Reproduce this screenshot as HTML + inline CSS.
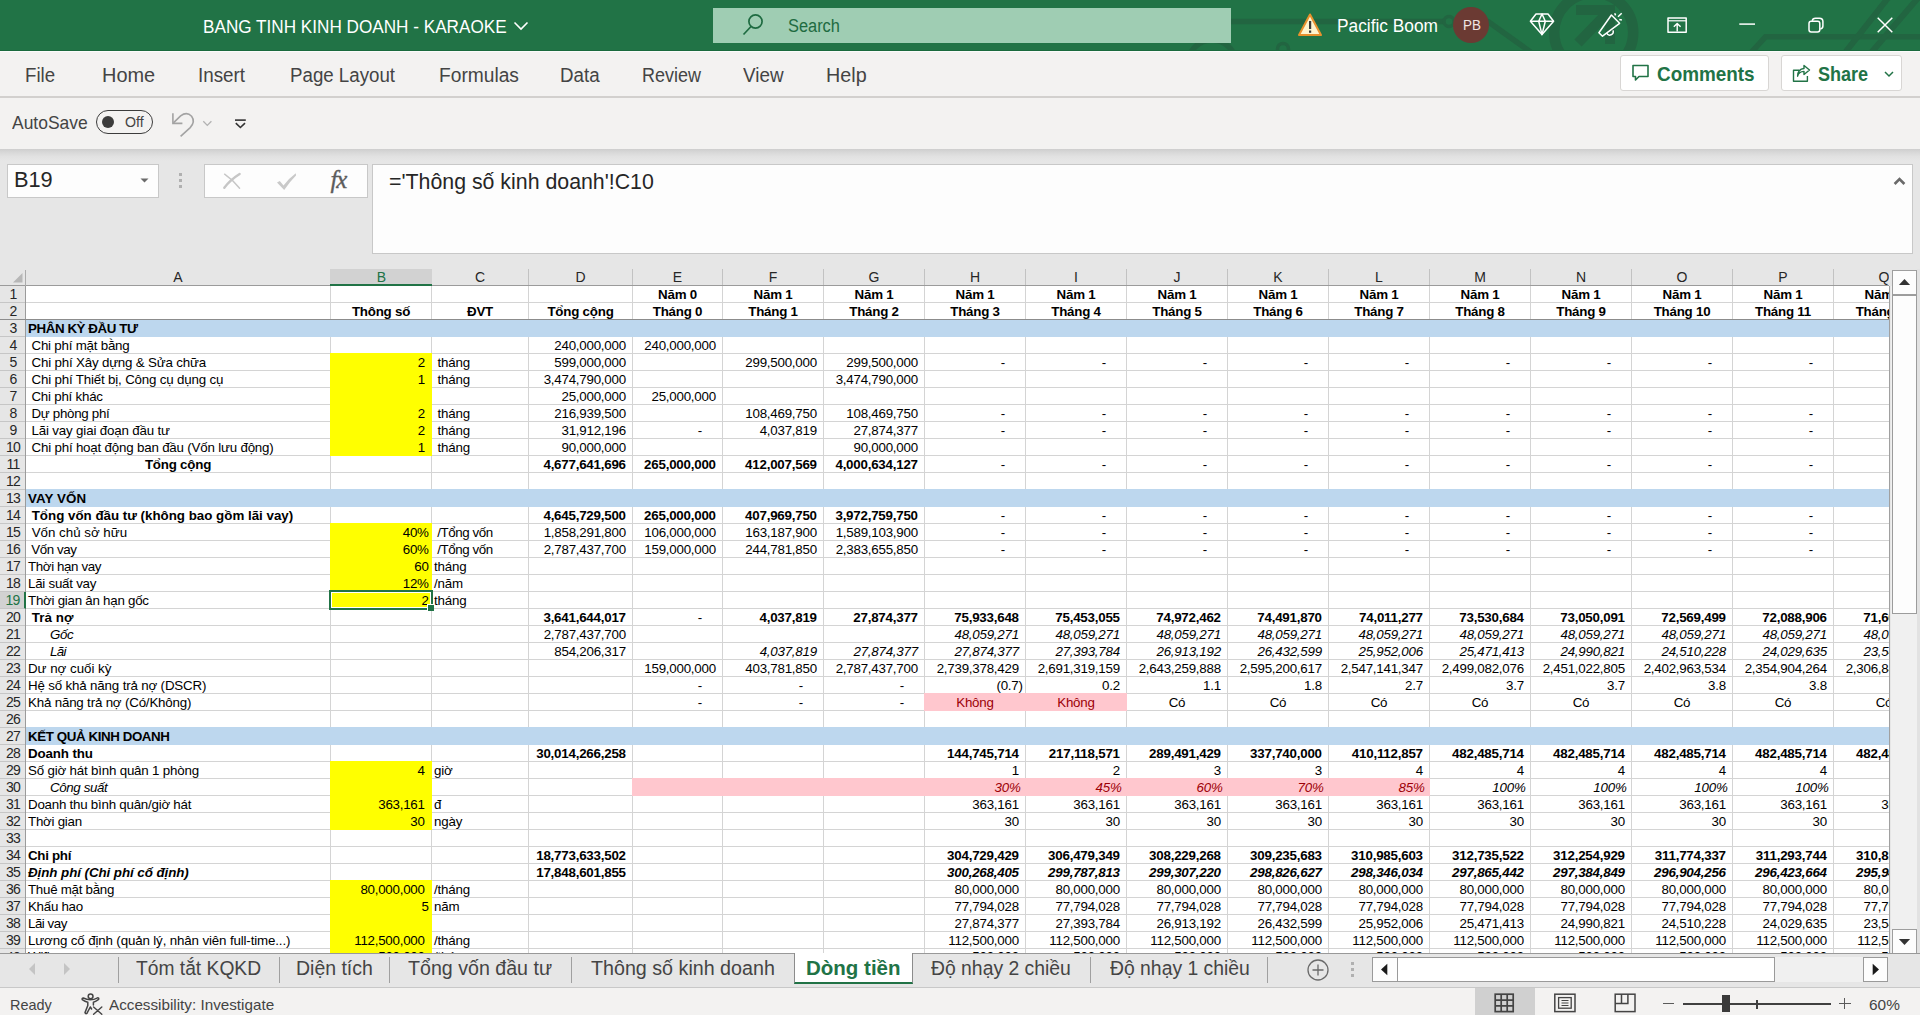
<!DOCTYPE html>
<html><head><meta charset="utf-8"><title>Excel</title>
<style>
*{box-sizing:border-box;margin:0;padding:0}
html,body{width:1920px;height:1015px;overflow:hidden;background:#e6e6e6;font-family:"Liberation Sans",sans-serif;}
.abs{position:absolute}
.t{position:absolute;white-space:pre;transform-origin:0 50%;}
/* title bar */
#title{position:absolute;left:0;top:0;width:1920px;height:51px;background:#217346;overflow:hidden;border-bottom:1px solid #1a6a3e}
#search{position:absolute;left:713px;top:8px;width:518px;height:35px;background:#9fcdb3}
/* ribbon */
#tabs{position:absolute;left:0;top:51px;width:1920px;height:45px;background:#f3f2f1;border-top:1px solid #fbfbfb}
#tabline{position:absolute;left:0;top:96px;width:1920px;height:2px;background:#d2d0ce}
#qat{position:absolute;left:0;top:98px;width:1920px;height:51px;background:#f3f2f1}
#shadow{position:absolute;left:0;top:149px;width:1920px;height:12px;background:linear-gradient(#cecece,#d7d7d7 25%,#e1e1e1 60%,#e6e6e6)}
.tab{position:absolute;top:63px;font-size:20px;line-height:24px;color:#444;white-space:pre;transform-origin:0 50%}
.btn{position:absolute;top:55px;height:36px;background:#fff;border:1px solid #d8d6d4;border-radius:3px}
/* formula bar */
#namebox{position:absolute;left:7px;top:164px;width:152px;height:34px;background:#fdfdfd;border:1px solid #c8c8c8}
#fxbox{position:absolute;left:204px;top:164px;width:164px;height:34px;background:#fdfdfd;border:1px solid #c8c8c8}
#formula{position:absolute;left:372px;top:164px;width:1541px;height:90px;background:#fdfdfd;border:1px solid #c8c8c8}
/* grid */
#grid{position:absolute;left:0;top:269px;width:1889px;height:684px;overflow:hidden;background:#fff}
#cells{position:absolute;left:0;top:0;width:1890px;height:700px;
 background:linear-gradient(#d4d4d4,#d4d4d4) 330px 0/1px 100% no-repeat,linear-gradient(#d4d4d4,#d4d4d4) 431px 0/1px 100% no-repeat,linear-gradient(#d4d4d4,#d4d4d4) 528px 0/1px 100% no-repeat,linear-gradient(#d4d4d4,#d4d4d4) 632px 0/1px 100% no-repeat,linear-gradient(#d4d4d4,#d4d4d4) 722px 0/1px 100% no-repeat,linear-gradient(#d4d4d4,#d4d4d4) 823px 0/1px 100% no-repeat,linear-gradient(#d4d4d4,#d4d4d4) 924px 0/1px 100% no-repeat,linear-gradient(#d4d4d4,#d4d4d4) 1025px 0/1px 100% no-repeat,linear-gradient(#d4d4d4,#d4d4d4) 1126px 0/1px 100% no-repeat,linear-gradient(#d4d4d4,#d4d4d4) 1227px 0/1px 100% no-repeat,linear-gradient(#d4d4d4,#d4d4d4) 1328px 0/1px 100% no-repeat,linear-gradient(#d4d4d4,#d4d4d4) 1429px 0/1px 100% no-repeat,linear-gradient(#d4d4d4,#d4d4d4) 1530px 0/1px 100% no-repeat,linear-gradient(#d4d4d4,#d4d4d4) 1631px 0/1px 100% no-repeat,linear-gradient(#d4d4d4,#d4d4d4) 1732px 0/1px 100% no-repeat,linear-gradient(#d4d4d4,#d4d4d4) 1833px 0/1px 100% no-repeat, repeating-linear-gradient(transparent 0,transparent 16px,#d4d4d4 16px,#d4d4d4 17px) 0 17px/100% 17px;}
.c{position:absolute;height:17px;line-height:17px;font-size:13.33px;letter-spacing:-0.2px;color:#000;white-space:pre;padding:0 2px;overflow:visible}
.f{position:absolute}
.b{font-weight:bold;letter-spacing:-0.22px !important}
.i{font-style:italic}
.ctr{text-align:center}
.r{text-align:right;padding-right:2.3px;letter-spacing:-0.24px}
.acc{text-align:right;padding-right:6.2px;letter-spacing:-0.24px}
.acc2{text-align:right;padding-right:6.3px;letter-spacing:-0.24px}
.dash{text-align:right;padding-right:20px}
.pct{text-align:right;padding-right:4.5px;letter-spacing:-0.24px}
.red{color:#9c0006}
.tv{letter-spacing:-0.42px}
.ind{padding-left:24px}
.ch{position:absolute;top:0;height:16px;line-height:17px;font-size:14px;text-align:center;color:#262626;background:#e6e6e6}
.ch.sel{background:#d2d2d2;color:#217346;border-bottom:2px solid #217346;margin-left:-1px;padding-left:1px;box-sizing:content-box;height:15px;width:101px !important;border-left:0;z-index:3}
.chs{position:absolute;top:0px;width:1px;height:16px;background:#c2c2c2}
.rh{position:absolute;left:0;width:25px;height:17px;line-height:17px;font-size:14px;text-align:center;color:#262626;background:#e6e6e6;letter-spacing:-0.7px;padding-left:1px;border-bottom:1px solid #c6c6c6}
.rh.sel{background:#d2d2d2;color:#217346;border-right:2px solid #217346;width:26px;z-index:3}
#hdrtop{position:absolute;left:0;top:0;width:1890px;height:17px;background:#e6e6e6;border-bottom:1px solid #9b9b9b}
#hdrleft{position:absolute;left:0;top:17px;width:26px;height:684px;background:#e6e6e6;border-right:1px solid #9b9b9b}
/* bottom */
#sheetbar{position:absolute;left:0;top:953px;width:1920px;height:34px;background:#e6e6e6;border-top:1px solid #999}
#status{position:absolute;left:0;top:987px;width:1920px;height:28px;background:#f3f2f1;border-top:1px solid #c8c8c8}
.st{position:absolute;top:956.3px;font-size:19.5px;line-height:24px;color:#444;white-space:pre;transform-origin:0 50%}
.sep{position:absolute;top:957px;width:1px;height:26px;background:#a0a0a0}
</style></head>
<body>
<!-- TITLE BAR -->
<div id="title">
  <svg class="abs" style="left:0;top:0" width="1920" height="51" viewBox="0 0 1920 51" fill="none" stroke="#226541" stroke-width="5.5">
    <path d="M1231 21.5 H1443 M1455 21.5 H1488 L1532 53"/>
    <circle cx="1449" cy="21.5" r="5" stroke-width="3.5"/>
    <circle cx="1283" cy="49" r="5.5" stroke-width="3.5"/>
    <circle cx="1212" cy="64" r="24"/>
    <circle cx="1593.7" cy="32.5" r="39.5" stroke-width="10.5"/>
    <path d="M1576 10 H1610 V44 M1609 11 L1578 43" stroke-width="10"/>
    <path d="M1748 56 L1765.5 36.8 H1920"/>
    <path d="M1888 -2 L1844 54 M1918 -2 L1870 54" stroke-width="6"/>
  </svg>
  <div class="t" id="tt" style="left:203.05px;transform:scaleX(0.9527);top:14px;font-size:18px;line-height:26px;color:#fff">BANG TINH KINH DOANH - KARAOKE</div>
  <svg class="abs" style="left:513px;top:20px" width="16" height="12" viewBox="0 0 16 12" fill="none" stroke="#fff" stroke-width="1.6"><path d="M1.5 2.5 L8 9 L14.5 2.5"/></svg>
  <div id="search"></div>
  <svg class="abs" style="left:740px;top:10px" width="30" height="30" viewBox="0 0 30 30" fill="none" stroke="#1e6b41" stroke-width="1.7"><circle cx="15.5" cy="11.5" r="6.6"/><path d="M11 16.5 L3.5 24.5"/></svg>
  <div class="t" id="ts" style="left:787.50px;transform:scaleX(0.9104);top:13px;font-size:18px;line-height:26px;color:#1e6b41">Search</div>
  <!-- warning -->
  <svg class="abs" style="left:1297px;top:12px" width="26" height="26" viewBox="0 0 26 26"><path d="M13 2.5 L24 23 H2 Z" fill="#fff4ce" stroke="#e8912d" stroke-width="2" stroke-linejoin="round"/><rect x="12" y="9" width="2.2" height="8" fill="#3b3a39"/><rect x="12" y="18.5" width="2.2" height="2.3" fill="#3b3a39"/></svg>
  <div class="t" id="tp" style="left:1336.54px;transform:scaleX(0.9608);top:13px;font-size:18px;line-height:26px;color:#fff">Pacific Boom</div>
  <div class="abs" style="left:1453px;top:7px;width:36px;height:36px;border-radius:18px;background:#6b3a33"></div>
  <div class="t" id="tpb" style="left:1462.61px;transform:scaleX(0.8945);top:14px;font-size:15px;line-height:22px;color:#f0e6e4">PB</div>
  <!-- diamond -->
  <svg class="abs" style="left:1520px;top:5px" width="180" height="40" viewBox="1520 5 180 40" fill="none" stroke="#fff" stroke-width="1.5" stroke-linejoin="round" stroke-linecap="butt">
    <path d="M1536 14 H1548 L1553.6 21.2 L1542 34.6 L1530.4 21.2 Z"/>
    <path d="M1530.4 21.2 H1553.6 M1538.7 21.2 L1542 14 L1545.3 21.2 M1538.7 21.2 L1542 34.6 L1545.3 21.2"/>
    <!-- megaphone -->
    <path d="M1611.4 15 L1619.6 23.3 L1602.5 36.2 L1598.9 32.7 Z"/>
    <path d="M1606.7 33 A3.3 3.3 0 0 0 1612.9 30.4"/>
    <path d="M1614.7 13.2 L1615.6 15.4 M1618 16.7 L1621.7 13.3 M1619.3 19.6 L1621.9 20"/>
    <!-- ribbon display -->
    <rect x="1668" y="18" width="18.2" height="14.2"/>
    <path d="M1668 20.8 H1686" stroke-width="1.2"/>
    <path d="M1677.2 31.5 V23.6 M1673.8 26.8 L1677.2 23.4 L1680.6 26.8" stroke-width="1.4"/>
  </svg>
  <!-- min / restore / close -->
  <svg class="abs" style="left:1720px;top:5px" width="200" height="40" viewBox="1720 5 200 40" fill="none" stroke="#fff" stroke-width="1.5">
    <path d="M1739.3 24.1 H1755"/>
    <rect x="1809" y="21.2" width="10.8" height="10.8" rx="2.2"/>
    <path d="M1812.3 20.8 Q1812.6 18.2 1815.5 18.2 H1819.5 Q1822.9 18.2 1822.9 21.6 V26 Q1822.9 28.6 1820.3 28.9"/>
    <path d="M1877.7 17.7 L1892.3 32.3 M1892.3 17.7 L1877.7 32.3"/>
  </svg>
</div>
<!-- RIBBON TABS -->
<div id="tabs"></div>
<div id="tabline"></div>
<div id="qat"></div>
<div id="shadow"></div>
<div class="tab" id="tab0" style="left:25.07px;transform:scaleX(0.9324);">File</div>
<div class="tab" id="tab1" style="left:102.00px;transform:scaleX(0.9957);">Home</div>
<div class="tab" id="tab2" style="left:198.06px;transform:scaleX(0.9401);">Insert</div>
<div class="tab" id="tab3" style="left:290.06px;transform:scaleX(0.9351);">Page Layout</div>
<div class="tab" id="tab4" style="left:439.04px;transform:scaleX(0.9593);">Formulas</div>
<div class="tab" id="tab5" style="left:560.06px;transform:scaleX(0.9377);">Data</div>
<div class="tab" id="tab6" style="left:641.60px;transform:scaleX(0.8982);">Review</div>
<div class="tab" id="tab7" style="left:743.00px;transform:scaleX(0.9416);">View</div>
<div class="tab" id="tab8" style="left:826.01px;transform:scaleX(0.9873);">Help</div>
<div class="btn" style="left:1620px;width:149px"></div>
<div class="btn" style="left:1781px;width:121px"></div>
<svg class="abs" style="left:1631px;top:63px" width="20" height="20" viewBox="0 0 20 20" fill="none" stroke="#217346" stroke-width="1.6" stroke-linejoin="round"><path d="M2 2.5 H17 V13.5 H8 L4.5 17 V13.5 H2 Z"/></svg>
<div class="t" id="tcm" style="left:1657.00px;transform:scaleX(0.8995);top:61px;font-size:21px;line-height:26px;color:#217346;font-weight:bold">Comments</div>
<svg class="abs" style="left:1790px;top:62px" width="24" height="22" viewBox="1790 62 24 22" fill="none" stroke="#217346" stroke-width="1.4" stroke-linejoin="round"><path d="M1799 70.2 H1793.5 V81.2 H1807.4 V76"/><path d="M1797.6 76.2 Q1798.6 71.6 1804 71.4 V74.5 L1809.5 70 L1804 65.5 V68.5 Q1797.9 68.9 1797.6 76.2 Z"/></svg>
<div class="t" id="tsh" style="left:1818.00px;transform:scaleX(0.8581);top:61px;font-size:21px;line-height:26px;color:#217346;font-weight:bold">Share</div>
<svg class="abs" style="left:1883px;top:69px" width="12" height="10" viewBox="0 0 12 10" fill="none" stroke="#217346" stroke-width="1.5"><path d="M2 3 L6 7 L10 3"/></svg>
<!-- QAT -->
<div class="t" id="tas" style="left:11.50px;transform:scaleX(0.9445);top:110px;font-size:18.5px;line-height:26px;color:#444">AutoSave</div>
<div class="abs" style="left:96px;top:110px;width:57px;height:24px;border:1.4px solid #3c3c3c;border-radius:12px"></div>
<div class="abs" style="left:102px;top:116px;width:12px;height:12px;border-radius:6px;background:#3c3c3c"></div>
<div class="t" id="toff" style="left:125.00px;transform:scaleX(1.0121);top:112px;font-size:14px;line-height:20px;color:#444">Off</div>
<svg class="abs" style="left:168px;top:108px" width="32" height="32" viewBox="168 108 32 32" fill="none" stroke="#a3a3a3" stroke-width="1.6"><path d="M172.9 113.2 V123.4 H182.4"/><path d="M173.4 122.9 L180.6 115.9 Q186.8 111.3 191.6 116.2 Q195.6 121.6 190.2 127.6 L180.6 136.4"/></svg>
<svg class="abs" style="left:201px;top:118px" width="14" height="10" viewBox="201 118 14 10" fill="none" stroke="#b2b2b2" stroke-width="1.3"><path d="M203.3 121.3 L207.3 125.4 L211.4 121.3"/></svg>
<svg class="abs" style="left:232px;top:116px" width="17" height="15" viewBox="232 116 17 15" fill="none" stroke="#333" stroke-width="1.6"><path d="M235 120.1 H245.8"/><path d="M235.8 123.2 L240.4 127.5 L245 123.2"/></svg>
<!-- FORMULA BAR -->
<div id="namebox"></div>
<div class="t" id="tnb" style="left:14.01px;transform:scaleX(0.9892);top:167px;font-size:22px;line-height:26px;color:#262626">B19</div>
<svg class="abs" style="left:140px;top:178px" width="9" height="5" viewBox="0 0 9 5"><path d="M0.5 0.5 H8.5 L4.5 4.5 Z" fill="#6a6a6a"/></svg>
<div class="abs" style="left:179px;top:173px;width:3px;height:3px;background:#b0b0b0"></div>
<div class="abs" style="left:179px;top:179px;width:3px;height:3px;background:#b0b0b0"></div>
<div class="abs" style="left:179px;top:185px;width:3px;height:3px;background:#b0b0b0"></div>
<div id="fxbox"></div>
<svg class="abs" style="left:220px;top:170px" width="24" height="22" viewBox="220 170 24 22" fill="none" stroke="#c6c6c6" stroke-linecap="round"><path d="M224.3 187.8 Q230 180 239.6 174" stroke-width="2.4"/><path d="M224.6 174.2 Q233 180 239.6 188.2" stroke-width="1.4"/></svg>
<svg class="abs" style="left:274px;top:170px" width="26" height="22" viewBox="274 170 26 22"><path d="M277 182.5 L279.8 181 L283.5 185.5 Q288.5 178.5 295.8 173.2 L296 175.5 Q289.5 182 284.2 190 Z" fill="#c9c9c9"/></svg>
<div class="t" style="left:330.5px;top:165.5px;font-family:'Liberation Serif',serif;font-style:italic;font-size:25px;line-height:28px;color:#5c5c5c;letter-spacing:-1.2px;-webkit-text-stroke:0.35px #5c5c5c">fx</div>
<div id="formula"></div>
<div class="t" id="tfm" style="left:388.50px;transform:scaleX(1.0014);top:169px;font-size:21.3px;line-height:26px;color:#262626">='Thông số kinh doanh'!C10</div>
<svg class="abs" style="left:1892px;top:175px" width="15" height="12" viewBox="1892 175 15 12" fill="none" stroke="#6a6a6a" stroke-width="2.6"><path d="M1894.6 184 L1899.5 179 L1904.4 184"/></svg>
<!-- GRID -->
<div id="grid">
  <div id="cells">
<div class="f" style="left:26px;top:50px;width:1909px;height:18px;background:#bdd7ee"></div>
<div class="f" style="left:26px;top:220px;width:1909px;height:18px;background:#bdd7ee"></div>
<div class="f" style="left:26px;top:458px;width:1909px;height:18px;background:#bdd7ee"></div>
<div class="f" style="left:330px;top:84px;width:102px;height:103px;background:#ffff00"></div>
<div class="f" style="left:330px;top:254px;width:102px;height:86px;background:#ffff00"></div>
<div class="f" style="left:330px;top:492px;width:102px;height:69px;background:#ffff00"></div>
<div class="f" style="left:330px;top:611px;width:102px;height:86px;background:#ffff00"></div>
<div class="f" style="left:924px;top:424px;width:203px;height:18px;background:#ffc7ce"></div>
<div class="f" style="left:632px;top:509px;width:798px;height:18px;background:#ffc7ce"></div>
<div class="c b ctr" style="left:633px;top:17px;width:89px">Năm 0</div>
<div class="c b ctr" style="left:723px;top:17px;width:100px">Năm 1</div>
<div class="c b ctr" style="left:824px;top:17px;width:100px">Năm 1</div>
<div class="c b ctr" style="left:925px;top:17px;width:100px">Năm 1</div>
<div class="c b ctr" style="left:1026px;top:17px;width:100px">Năm 1</div>
<div class="c b ctr" style="left:1127px;top:17px;width:100px">Năm 1</div>
<div class="c b ctr" style="left:1228px;top:17px;width:100px">Năm 1</div>
<div class="c b ctr" style="left:1329px;top:17px;width:100px">Năm 1</div>
<div class="c b ctr" style="left:1430px;top:17px;width:100px">Năm 1</div>
<div class="c b ctr" style="left:1531px;top:17px;width:100px">Năm 1</div>
<div class="c b ctr" style="left:1632px;top:17px;width:100px">Năm 1</div>
<div class="c b ctr" style="left:1733px;top:17px;width:100px">Năm 1</div>
<div class="c b ctr" style="left:1834px;top:17px;width:100px">Năm 1</div>
<div class="c b ctr" style="left:331px;top:34px;width:100px">Thông số</div>
<div class="c b ctr" style="left:432px;top:34px;width:96px">ĐVT</div>
<div class="c b ctr" style="left:529px;top:34px;width:103px">Tổng cộng</div>
<div class="c b ctr" style="left:633px;top:34px;width:89px">Tháng 0</div>
<div class="c b ctr" style="left:723px;top:34px;width:100px">Tháng 1</div>
<div class="c b ctr" style="left:824px;top:34px;width:100px">Tháng 2</div>
<div class="c b ctr" style="left:925px;top:34px;width:100px">Tháng 3</div>
<div class="c b ctr" style="left:1026px;top:34px;width:100px">Tháng 4</div>
<div class="c b ctr" style="left:1127px;top:34px;width:100px">Tháng 5</div>
<div class="c b ctr" style="left:1228px;top:34px;width:100px">Tháng 6</div>
<div class="c b ctr" style="left:1329px;top:34px;width:100px">Tháng 7</div>
<div class="c b ctr" style="left:1430px;top:34px;width:100px">Tháng 8</div>
<div class="c b ctr" style="left:1531px;top:34px;width:100px">Tháng 9</div>
<div class="c b ctr" style="left:1632px;top:34px;width:100px">Tháng 10</div>
<div class="c b ctr" style="left:1733px;top:34px;width:100px">Tháng 11</div>
<div class="c b ctr" style="left:1834px;top:34px;width:100px">Tháng 12</div>
<div id="a3" class="c b" style="letter-spacing:-0.416px !important;left:26px;top:51px;width:304px">PHÂN KỲ ĐẦU TƯ</div>
<div id="a4" class="c " style="letter-spacing:-0.218px !important;left:26px;top:68px;width:304px"> Chi phí mặt bằng</div>
<div class="c acc " style="left:529px;top:68px;width:103px">240,000,000</div>
<div class="c acc " style="left:633px;top:68px;width:89px">240,000,000</div>
<div id="a5" class="c " style="letter-spacing:-0.185px !important;left:26px;top:85px;width:304px"> Chi phí Xây dựng &amp; Sửa chữa</div>
<div class="c acc" style="left:331px;top:85px;width:100px">2</div>
<div class="c " style="left:432px;top:85px;width:96px"> tháng</div>
<div class="c acc " style="left:529px;top:85px;width:103px">599,000,000</div>
<div class="c acc " style="left:723px;top:85px;width:100px">299,500,000</div>
<div class="c acc " style="left:824px;top:85px;width:100px">299,500,000</div>
<div class="c dash" style="left:925px;top:85px;width:100px">-</div>
<div class="c dash" style="left:1026px;top:85px;width:100px">-</div>
<div class="c dash" style="left:1127px;top:85px;width:100px">-</div>
<div class="c dash" style="left:1228px;top:85px;width:100px">-</div>
<div class="c dash" style="left:1329px;top:85px;width:100px">-</div>
<div class="c dash" style="left:1430px;top:85px;width:100px">-</div>
<div class="c dash" style="left:1531px;top:85px;width:100px">-</div>
<div class="c dash" style="left:1632px;top:85px;width:100px">-</div>
<div class="c dash" style="left:1733px;top:85px;width:100px">-</div>
<div id="a6" class="c " style="letter-spacing:-0.176px !important;left:26px;top:102px;width:304px"> Chi phí Thiết bị, Công cụ dụng cụ</div>
<div class="c acc" style="left:331px;top:102px;width:100px">1</div>
<div class="c " style="left:432px;top:102px;width:96px"> tháng</div>
<div class="c acc " style="left:529px;top:102px;width:103px">3,474,790,000</div>
<div class="c acc " style="left:824px;top:102px;width:100px">3,474,790,000</div>
<div id="a7" class="c " style="letter-spacing:-0.235px !important;left:26px;top:119px;width:304px"> Chi phí khác</div>
<div class="c acc " style="left:529px;top:119px;width:103px">25,000,000</div>
<div class="c acc " style="left:633px;top:119px;width:89px">25,000,000</div>
<div id="a8" class="c " style="letter-spacing:-0.295px !important;left:26px;top:136px;width:304px"> Dự phòng phí</div>
<div class="c acc" style="left:331px;top:136px;width:100px">2</div>
<div class="c " style="left:432px;top:136px;width:96px"> tháng</div>
<div class="c acc " style="left:529px;top:136px;width:103px">216,939,500</div>
<div class="c acc " style="left:723px;top:136px;width:100px">108,469,750</div>
<div class="c acc " style="left:824px;top:136px;width:100px">108,469,750</div>
<div class="c dash" style="left:925px;top:136px;width:100px">-</div>
<div class="c dash" style="left:1026px;top:136px;width:100px">-</div>
<div class="c dash" style="left:1127px;top:136px;width:100px">-</div>
<div class="c dash" style="left:1228px;top:136px;width:100px">-</div>
<div class="c dash" style="left:1329px;top:136px;width:100px">-</div>
<div class="c dash" style="left:1430px;top:136px;width:100px">-</div>
<div class="c dash" style="left:1531px;top:136px;width:100px">-</div>
<div class="c dash" style="left:1632px;top:136px;width:100px">-</div>
<div class="c dash" style="left:1733px;top:136px;width:100px">-</div>
<div id="a9" class="c " style="letter-spacing:-0.170px !important;left:26px;top:153px;width:304px"> Lãi vay giai đoạn đầu tư</div>
<div class="c acc" style="left:331px;top:153px;width:100px">2</div>
<div class="c " style="left:432px;top:153px;width:96px"> tháng</div>
<div class="c acc " style="left:529px;top:153px;width:103px">31,912,196</div>
<div class="c dash" style="left:633px;top:153px;width:89px">-</div>
<div class="c acc " style="left:723px;top:153px;width:100px">4,037,819</div>
<div class="c acc " style="left:824px;top:153px;width:100px">27,874,377</div>
<div class="c dash" style="left:925px;top:153px;width:100px">-</div>
<div class="c dash" style="left:1026px;top:153px;width:100px">-</div>
<div class="c dash" style="left:1127px;top:153px;width:100px">-</div>
<div class="c dash" style="left:1228px;top:153px;width:100px">-</div>
<div class="c dash" style="left:1329px;top:153px;width:100px">-</div>
<div class="c dash" style="left:1430px;top:153px;width:100px">-</div>
<div class="c dash" style="left:1531px;top:153px;width:100px">-</div>
<div class="c dash" style="left:1632px;top:153px;width:100px">-</div>
<div class="c dash" style="left:1733px;top:153px;width:100px">-</div>
<div id="a10" class="c " style="letter-spacing:-0.193px !important;left:26px;top:170px;width:304px"> Chi phí hoạt động ban đầu (Vốn lưu động)</div>
<div class="c acc" style="left:331px;top:170px;width:100px">1</div>
<div class="c " style="left:432px;top:170px;width:96px"> tháng</div>
<div class="c acc " style="left:529px;top:170px;width:103px">90,000,000</div>
<div class="c acc " style="left:824px;top:170px;width:100px">90,000,000</div>
<div class="c b ctr" style="left:26px;top:187px;width:304px">Tổng cộng</div>
<div class="c acc b" style="left:529px;top:187px;width:103px">4,677,641,696</div>
<div class="c acc b" style="left:633px;top:187px;width:89px">265,000,000</div>
<div class="c acc b" style="left:723px;top:187px;width:100px">412,007,569</div>
<div class="c acc b" style="left:824px;top:187px;width:100px">4,000,634,127</div>
<div class="c dash" style="left:925px;top:187px;width:100px">-</div>
<div class="c dash" style="left:1026px;top:187px;width:100px">-</div>
<div class="c dash" style="left:1127px;top:187px;width:100px">-</div>
<div class="c dash" style="left:1228px;top:187px;width:100px">-</div>
<div class="c dash" style="left:1329px;top:187px;width:100px">-</div>
<div class="c dash" style="left:1430px;top:187px;width:100px">-</div>
<div class="c dash" style="left:1531px;top:187px;width:100px">-</div>
<div class="c dash" style="left:1632px;top:187px;width:100px">-</div>
<div class="c dash" style="left:1733px;top:187px;width:100px">-</div>
<div id="a13" class="c b" style="letter-spacing:0.091px !important;left:26px;top:221px;width:304px">VAY VỐN</div>
<div id="a14" class="c b" style="letter-spacing:0.001px !important;left:26px;top:238px;width:304px"> Tổng vốn đầu tư (không bao gồm lãi vay)</div>
<div class="c acc b" style="left:529px;top:238px;width:103px">4,645,729,500</div>
<div class="c acc b" style="left:633px;top:238px;width:89px">265,000,000</div>
<div class="c acc b" style="left:723px;top:238px;width:100px">407,969,750</div>
<div class="c acc b" style="left:824px;top:238px;width:100px">3,972,759,750</div>
<div class="c dash" style="left:925px;top:238px;width:100px">-</div>
<div class="c dash" style="left:1026px;top:238px;width:100px">-</div>
<div class="c dash" style="left:1127px;top:238px;width:100px">-</div>
<div class="c dash" style="left:1228px;top:238px;width:100px">-</div>
<div class="c dash" style="left:1329px;top:238px;width:100px">-</div>
<div class="c dash" style="left:1430px;top:238px;width:100px">-</div>
<div class="c dash" style="left:1531px;top:238px;width:100px">-</div>
<div class="c dash" style="left:1632px;top:238px;width:100px">-</div>
<div class="c dash" style="left:1733px;top:238px;width:100px">-</div>
<div id="a15" class="c " style="letter-spacing:-0.004px !important;left:26px;top:255px;width:304px"> Vốn chủ sở hữu</div>
<div class="c r" style="left:331px;top:255px;width:100px">40%</div>
<div class="c tv" style="left:432px;top:255px;width:96px"> /Tổng vốn</div>
<div class="c acc " style="left:529px;top:255px;width:103px">1,858,291,800</div>
<div class="c acc " style="left:633px;top:255px;width:89px">106,000,000</div>
<div class="c acc " style="left:723px;top:255px;width:100px">163,187,900</div>
<div class="c acc " style="left:824px;top:255px;width:100px">1,589,103,900</div>
<div class="c dash" style="left:925px;top:255px;width:100px">-</div>
<div class="c dash" style="left:1026px;top:255px;width:100px">-</div>
<div class="c dash" style="left:1127px;top:255px;width:100px">-</div>
<div class="c dash" style="left:1228px;top:255px;width:100px">-</div>
<div class="c dash" style="left:1329px;top:255px;width:100px">-</div>
<div class="c dash" style="left:1430px;top:255px;width:100px">-</div>
<div class="c dash" style="left:1531px;top:255px;width:100px">-</div>
<div class="c dash" style="left:1632px;top:255px;width:100px">-</div>
<div class="c dash" style="left:1733px;top:255px;width:100px">-</div>
<div id="a16" class="c " style="letter-spacing:-0.414px !important;left:26px;top:272px;width:304px"> Vốn vay</div>
<div class="c r" style="left:331px;top:272px;width:100px">60%</div>
<div class="c tv" style="left:432px;top:272px;width:96px"> /Tổng vốn</div>
<div class="c acc " style="left:529px;top:272px;width:103px">2,787,437,700</div>
<div class="c acc " style="left:633px;top:272px;width:89px">159,000,000</div>
<div class="c acc " style="left:723px;top:272px;width:100px">244,781,850</div>
<div class="c acc " style="left:824px;top:272px;width:100px">2,383,655,850</div>
<div class="c dash" style="left:925px;top:272px;width:100px">-</div>
<div class="c dash" style="left:1026px;top:272px;width:100px">-</div>
<div class="c dash" style="left:1127px;top:272px;width:100px">-</div>
<div class="c dash" style="left:1228px;top:272px;width:100px">-</div>
<div class="c dash" style="left:1329px;top:272px;width:100px">-</div>
<div class="c dash" style="left:1430px;top:272px;width:100px">-</div>
<div class="c dash" style="left:1531px;top:272px;width:100px">-</div>
<div class="c dash" style="left:1632px;top:272px;width:100px">-</div>
<div class="c dash" style="left:1733px;top:272px;width:100px">-</div>
<div id="a17" class="c " style="letter-spacing:-0.389px !important;left:26px;top:289px;width:304px">Thời hạn vay</div>
<div class="c r" style="left:331px;top:289px;width:100px">60</div>
<div class="c " style="left:432px;top:289px;width:96px">tháng</div>
<div id="a18" class="c " style="letter-spacing:-0.251px !important;left:26px;top:306px;width:304px">Lãi suất vay</div>
<div class="c r" style="left:331px;top:306px;width:100px">12%</div>
<div class="c " style="left:432px;top:306px;width:96px">/năm</div>
<div id="a19" class="c " style="letter-spacing:-0.255px !important;left:26px;top:323px;width:304px">Thời gian ân hạn gốc</div>
<div class="c r" style="left:331px;top:323px;width:100px">2</div>
<div class="c " style="left:432px;top:323px;width:96px">tháng</div>
<div id="a20" class="c b" style="letter-spacing:0.075px !important;left:26px;top:340px;width:304px"> Trả nợ</div>
<div class="c acc b" style="left:529px;top:340px;width:103px">3,641,644,017</div>
<div class="c dash" style="left:633px;top:340px;width:89px">-</div>
<div class="c acc b" style="left:723px;top:340px;width:100px">4,037,819</div>
<div class="c acc b" style="left:824px;top:340px;width:100px">27,874,377</div>
<div class="c acc b" style="left:925px;top:340px;width:100px">75,933,648</div>
<div class="c acc b" style="left:1026px;top:340px;width:100px">75,453,055</div>
<div class="c acc b" style="left:1127px;top:340px;width:100px">74,972,462</div>
<div class="c acc b" style="left:1228px;top:340px;width:100px">74,491,870</div>
<div class="c acc b" style="left:1329px;top:340px;width:100px">74,011,277</div>
<div class="c acc b" style="left:1430px;top:340px;width:100px">73,530,684</div>
<div class="c acc b" style="left:1531px;top:340px;width:100px">73,050,091</div>
<div class="c acc b" style="left:1632px;top:340px;width:100px">72,569,499</div>
<div class="c acc b" style="left:1733px;top:340px;width:100px">72,088,906</div>
<div class="c acc b" style="left:1834px;top:340px;width:100px">71,608,313</div>
<div id="a21" class="c i ind" style="letter-spacing:-0.390px !important;left:26px;top:357px;width:304px">Gốc</div>
<div class="c acc " style="left:529px;top:357px;width:103px">2,787,437,700</div>
<div class="c acc i" style="left:925px;top:357px;width:100px">48,059,271</div>
<div class="c acc i" style="left:1026px;top:357px;width:100px">48,059,271</div>
<div class="c acc i" style="left:1127px;top:357px;width:100px">48,059,271</div>
<div class="c acc i" style="left:1228px;top:357px;width:100px">48,059,271</div>
<div class="c acc i" style="left:1329px;top:357px;width:100px">48,059,271</div>
<div class="c acc i" style="left:1430px;top:357px;width:100px">48,059,271</div>
<div class="c acc i" style="left:1531px;top:357px;width:100px">48,059,271</div>
<div class="c acc i" style="left:1632px;top:357px;width:100px">48,059,271</div>
<div class="c acc i" style="left:1733px;top:357px;width:100px">48,059,271</div>
<div class="c acc i" style="left:1834px;top:357px;width:100px">48,059,271</div>
<div id="a22" class="c i ind" style="letter-spacing:-0.600px !important;left:26px;top:374px;width:304px">Lãi</div>
<div class="c acc " style="left:529px;top:374px;width:103px">854,206,317</div>
<div class="c acc i" style="left:723px;top:374px;width:100px">4,037,819</div>
<div class="c acc i" style="left:824px;top:374px;width:100px">27,874,377</div>
<div class="c acc i" style="left:925px;top:374px;width:100px">27,874,377</div>
<div class="c acc i" style="left:1026px;top:374px;width:100px">27,393,784</div>
<div class="c acc i" style="left:1127px;top:374px;width:100px">26,913,192</div>
<div class="c acc i" style="left:1228px;top:374px;width:100px">26,432,599</div>
<div class="c acc i" style="left:1329px;top:374px;width:100px">25,952,006</div>
<div class="c acc i" style="left:1430px;top:374px;width:100px">25,471,413</div>
<div class="c acc i" style="left:1531px;top:374px;width:100px">24,990,821</div>
<div class="c acc i" style="left:1632px;top:374px;width:100px">24,510,228</div>
<div class="c acc i" style="left:1733px;top:374px;width:100px">24,029,635</div>
<div class="c acc i" style="left:1834px;top:374px;width:100px">23,549,042</div>
<div id="a23" class="c " style="letter-spacing:-0.019px !important;left:26px;top:391px;width:304px">Dư nợ cuối kỳ</div>
<div class="c acc " style="left:633px;top:391px;width:89px">159,000,000</div>
<div class="c acc " style="left:723px;top:391px;width:100px">403,781,850</div>
<div class="c acc " style="left:824px;top:391px;width:100px">2,787,437,700</div>
<div class="c acc " style="left:925px;top:391px;width:100px">2,739,378,429</div>
<div class="c acc " style="left:1026px;top:391px;width:100px">2,691,319,159</div>
<div class="c acc " style="left:1127px;top:391px;width:100px">2,643,259,888</div>
<div class="c acc " style="left:1228px;top:391px;width:100px">2,595,200,617</div>
<div class="c acc " style="left:1329px;top:391px;width:100px">2,547,141,347</div>
<div class="c acc " style="left:1430px;top:391px;width:100px">2,499,082,076</div>
<div class="c acc " style="left:1531px;top:391px;width:100px">2,451,022,805</div>
<div class="c acc " style="left:1632px;top:391px;width:100px">2,402,963,534</div>
<div class="c acc " style="left:1733px;top:391px;width:100px">2,354,904,264</div>
<div class="c acc " style="left:1834px;top:391px;width:100px">2,306,844,993</div>
<div id="a24" class="c " style="letter-spacing:-0.162px !important;left:26px;top:408px;width:304px">Hệ số khả năng trả nợ (DSCR)</div>
<div class="c dash" style="left:633px;top:408px;width:89px">-</div>
<div class="c dash" style="left:723px;top:408px;width:100px">-</div>
<div class="c dash" style="left:824px;top:408px;width:100px">-</div>
<div class="c r" style="left:925px;top:408px;width:100px">(0.7)</div>
<div class="c acc" style="left:1026px;top:408px;width:100px">0.2</div>
<div class="c acc" style="left:1127px;top:408px;width:100px">1.1</div>
<div class="c acc" style="left:1228px;top:408px;width:100px">1.8</div>
<div class="c acc" style="left:1329px;top:408px;width:100px">2.7</div>
<div class="c acc" style="left:1430px;top:408px;width:100px">3.7</div>
<div class="c acc" style="left:1531px;top:408px;width:100px">3.7</div>
<div class="c acc" style="left:1632px;top:408px;width:100px">3.8</div>
<div class="c acc" style="left:1733px;top:408px;width:100px">3.8</div>
<div id="a25" class="c " style="letter-spacing:-0.184px !important;left:26px;top:425px;width:304px">Khả năng trả nợ (Có/Không)</div>
<div class="c dash" style="left:633px;top:425px;width:89px">-</div>
<div class="c dash" style="left:723px;top:425px;width:100px">-</div>
<div class="c dash" style="left:824px;top:425px;width:100px">-</div>
<div class="c ctr red" style="left:925px;top:425px;width:100px">Không</div>
<div class="c ctr red" style="left:1026px;top:425px;width:100px">Không</div>
<div class="c ctr" style="left:1127px;top:425px;width:100px">Có</div>
<div class="c ctr" style="left:1228px;top:425px;width:100px">Có</div>
<div class="c ctr" style="left:1329px;top:425px;width:100px">Có</div>
<div class="c ctr" style="left:1430px;top:425px;width:100px">Có</div>
<div class="c ctr" style="left:1531px;top:425px;width:100px">Có</div>
<div class="c ctr" style="left:1632px;top:425px;width:100px">Có</div>
<div class="c ctr" style="left:1733px;top:425px;width:100px">Có</div>
<div class="c ctr" style="left:1834px;top:425px;width:100px">Có</div>
<div id="a27" class="c b" style="letter-spacing:-0.406px !important;left:26px;top:459px;width:304px">KẾT QUẢ KINH DOANH</div>
<div id="a28" class="c b" style="letter-spacing:-0.131px !important;left:26px;top:476px;width:304px">Doanh thu</div>
<div class="c acc b" style="left:529px;top:476px;width:103px">30,014,266,258</div>
<div class="c acc b" style="left:925px;top:476px;width:100px">144,745,714</div>
<div class="c acc b" style="left:1026px;top:476px;width:100px">217,118,571</div>
<div class="c acc b" style="left:1127px;top:476px;width:100px">289,491,429</div>
<div class="c acc b" style="left:1228px;top:476px;width:100px">337,740,000</div>
<div class="c acc b" style="left:1329px;top:476px;width:100px">410,112,857</div>
<div class="c acc b" style="left:1430px;top:476px;width:100px">482,485,714</div>
<div class="c acc b" style="left:1531px;top:476px;width:100px">482,485,714</div>
<div class="c acc b" style="left:1632px;top:476px;width:100px">482,485,714</div>
<div class="c acc b" style="left:1733px;top:476px;width:100px">482,485,714</div>
<div class="c acc b" style="left:1834px;top:476px;width:100px">482,485,714</div>
<div id="a29" class="c " style="letter-spacing:-0.189px !important;left:26px;top:493px;width:304px">Số giờ hát bình quân 1 phòng</div>
<div class="c acc2" style="left:331px;top:493px;width:100px">4</div>
<div class="c " style="left:432px;top:493px;width:96px">giờ</div>
<div class="c acc " style="left:925px;top:493px;width:100px">1</div>
<div class="c acc " style="left:1026px;top:493px;width:100px">2</div>
<div class="c acc " style="left:1127px;top:493px;width:100px">3</div>
<div class="c acc " style="left:1228px;top:493px;width:100px">3</div>
<div class="c acc " style="left:1329px;top:493px;width:100px">4</div>
<div class="c acc " style="left:1430px;top:493px;width:100px">4</div>
<div class="c acc " style="left:1531px;top:493px;width:100px">4</div>
<div class="c acc " style="left:1632px;top:493px;width:100px">4</div>
<div class="c acc " style="left:1733px;top:493px;width:100px">4</div>
<div id="a30" class="c i ind" style="letter-spacing:-0.382px !important;left:26px;top:510px;width:304px">Công suất</div>
<div class="c i pct red" style="left:925px;top:510px;width:100px">30%</div>
<div class="c i pct red" style="left:1026px;top:510px;width:100px">45%</div>
<div class="c i pct red" style="left:1127px;top:510px;width:100px">60%</div>
<div class="c i pct red" style="left:1228px;top:510px;width:100px">70%</div>
<div class="c i pct red" style="left:1329px;top:510px;width:100px">85%</div>
<div class="c i pct" style="left:1430px;top:510px;width:100px">100%</div>
<div class="c i pct" style="left:1531px;top:510px;width:100px">100%</div>
<div class="c i pct" style="left:1632px;top:510px;width:100px">100%</div>
<div class="c i pct" style="left:1733px;top:510px;width:100px">100%</div>
<div id="a31" class="c " style="letter-spacing:-0.236px !important;left:26px;top:527px;width:304px">Doanh thu bình quân/giờ hát</div>
<div class="c acc2" style="left:331px;top:527px;width:100px">363,161</div>
<div class="c " style="left:432px;top:527px;width:96px">đ</div>
<div class="c acc " style="left:925px;top:527px;width:100px">363,161</div>
<div class="c acc " style="left:1026px;top:527px;width:100px">363,161</div>
<div class="c acc " style="left:1127px;top:527px;width:100px">363,161</div>
<div class="c acc " style="left:1228px;top:527px;width:100px">363,161</div>
<div class="c acc " style="left:1329px;top:527px;width:100px">363,161</div>
<div class="c acc " style="left:1430px;top:527px;width:100px">363,161</div>
<div class="c acc " style="left:1531px;top:527px;width:100px">363,161</div>
<div class="c acc " style="left:1632px;top:527px;width:100px">363,161</div>
<div class="c acc " style="left:1733px;top:527px;width:100px">363,161</div>
<div class="c acc " style="left:1834px;top:527px;width:100px">363,161</div>
<div id="a32" class="c " style="letter-spacing:-0.256px !important;left:26px;top:544px;width:304px">Thời gian</div>
<div class="c acc2" style="left:331px;top:544px;width:100px">30</div>
<div class="c " style="left:432px;top:544px;width:96px">ngày</div>
<div class="c acc " style="left:925px;top:544px;width:100px">30</div>
<div class="c acc " style="left:1026px;top:544px;width:100px">30</div>
<div class="c acc " style="left:1127px;top:544px;width:100px">30</div>
<div class="c acc " style="left:1228px;top:544px;width:100px">30</div>
<div class="c acc " style="left:1329px;top:544px;width:100px">30</div>
<div class="c acc " style="left:1430px;top:544px;width:100px">30</div>
<div class="c acc " style="left:1531px;top:544px;width:100px">30</div>
<div class="c acc " style="left:1632px;top:544px;width:100px">30</div>
<div class="c acc " style="left:1733px;top:544px;width:100px">30</div>
<div id="a34" class="c b" style="letter-spacing:-0.293px !important;left:26px;top:578px;width:304px">Chi phí</div>
<div class="c acc b" style="left:529px;top:578px;width:103px">18,773,633,502</div>
<div class="c acc b" style="left:925px;top:578px;width:100px">304,729,429</div>
<div class="c acc b" style="left:1026px;top:578px;width:100px">306,479,349</div>
<div class="c acc b" style="left:1127px;top:578px;width:100px">308,229,268</div>
<div class="c acc b" style="left:1228px;top:578px;width:100px">309,235,683</div>
<div class="c acc b" style="left:1329px;top:578px;width:100px">310,985,603</div>
<div class="c acc b" style="left:1430px;top:578px;width:100px">312,735,522</div>
<div class="c acc b" style="left:1531px;top:578px;width:100px">312,254,929</div>
<div class="c acc b" style="left:1632px;top:578px;width:100px">311,774,337</div>
<div class="c acc b" style="left:1733px;top:578px;width:100px">311,293,744</div>
<div class="c acc b" style="left:1834px;top:578px;width:100px">310,813,151</div>
<div id="a35" class="c b i" style="letter-spacing:-0.055px !important;left:26px;top:595px;width:304px">Định phí (Chi phí cố định)</div>
<div class="c acc b" style="left:529px;top:595px;width:103px">17,848,601,855</div>
<div class="c acc b i" style="left:925px;top:595px;width:100px">300,268,405</div>
<div class="c acc b i" style="left:1026px;top:595px;width:100px">299,787,813</div>
<div class="c acc b i" style="left:1127px;top:595px;width:100px">299,307,220</div>
<div class="c acc b i" style="left:1228px;top:595px;width:100px">298,826,627</div>
<div class="c acc b i" style="left:1329px;top:595px;width:100px">298,346,034</div>
<div class="c acc b i" style="left:1430px;top:595px;width:100px">297,865,442</div>
<div class="c acc b i" style="left:1531px;top:595px;width:100px">297,384,849</div>
<div class="c acc b i" style="left:1632px;top:595px;width:100px">296,904,256</div>
<div class="c acc b i" style="left:1733px;top:595px;width:100px">296,423,664</div>
<div class="c acc b i" style="left:1834px;top:595px;width:100px">295,943,071</div>
<div id="a36" class="c " style="letter-spacing:-0.270px !important;left:26px;top:612px;width:304px">Thuê mặt bằng</div>
<div class="c acc2" style="left:331px;top:612px;width:100px">80,000,000</div>
<div class="c " style="left:432px;top:612px;width:96px">/tháng</div>
<div class="c acc " style="left:925px;top:612px;width:100px">80,000,000</div>
<div class="c acc " style="left:1026px;top:612px;width:100px">80,000,000</div>
<div class="c acc " style="left:1127px;top:612px;width:100px">80,000,000</div>
<div class="c acc " style="left:1228px;top:612px;width:100px">80,000,000</div>
<div class="c acc " style="left:1329px;top:612px;width:100px">80,000,000</div>
<div class="c acc " style="left:1430px;top:612px;width:100px">80,000,000</div>
<div class="c acc " style="left:1531px;top:612px;width:100px">80,000,000</div>
<div class="c acc " style="left:1632px;top:612px;width:100px">80,000,000</div>
<div class="c acc " style="left:1733px;top:612px;width:100px">80,000,000</div>
<div class="c acc " style="left:1834px;top:612px;width:100px">80,000,000</div>
<div id="a37" class="c " style="letter-spacing:-0.279px !important;left:26px;top:629px;width:304px">Khấu hao</div>
<div class="c r" style="left:331px;top:629px;width:100px">5</div>
<div class="c " style="left:432px;top:629px;width:96px">năm</div>
<div class="c acc " style="left:925px;top:629px;width:100px">77,794,028</div>
<div class="c acc " style="left:1026px;top:629px;width:100px">77,794,028</div>
<div class="c acc " style="left:1127px;top:629px;width:100px">77,794,028</div>
<div class="c acc " style="left:1228px;top:629px;width:100px">77,794,028</div>
<div class="c acc " style="left:1329px;top:629px;width:100px">77,794,028</div>
<div class="c acc " style="left:1430px;top:629px;width:100px">77,794,028</div>
<div class="c acc " style="left:1531px;top:629px;width:100px">77,794,028</div>
<div class="c acc " style="left:1632px;top:629px;width:100px">77,794,028</div>
<div class="c acc " style="left:1733px;top:629px;width:100px">77,794,028</div>
<div class="c acc " style="left:1834px;top:629px;width:100px">77,794,028</div>
<div id="a38" class="c " style="letter-spacing:-0.478px !important;left:26px;top:646px;width:304px">Lãi vay</div>
<div class="c acc " style="left:925px;top:646px;width:100px">27,874,377</div>
<div class="c acc " style="left:1026px;top:646px;width:100px">27,393,784</div>
<div class="c acc " style="left:1127px;top:646px;width:100px">26,913,192</div>
<div class="c acc " style="left:1228px;top:646px;width:100px">26,432,599</div>
<div class="c acc " style="left:1329px;top:646px;width:100px">25,952,006</div>
<div class="c acc " style="left:1430px;top:646px;width:100px">25,471,413</div>
<div class="c acc " style="left:1531px;top:646px;width:100px">24,990,821</div>
<div class="c acc " style="left:1632px;top:646px;width:100px">24,510,228</div>
<div class="c acc " style="left:1733px;top:646px;width:100px">24,029,635</div>
<div class="c acc " style="left:1834px;top:646px;width:100px">23,549,042</div>
<div id="a39" class="c " style="letter-spacing:-0.139px !important;left:26px;top:663px;width:304px">Lương cố định (quản lý, nhân viên full-time...)</div>
<div class="c acc2" style="left:331px;top:663px;width:100px">112,500,000</div>
<div class="c " style="left:432px;top:663px;width:96px">/tháng</div>
<div class="c acc " style="left:925px;top:663px;width:100px">112,500,000</div>
<div class="c acc " style="left:1026px;top:663px;width:100px">112,500,000</div>
<div class="c acc " style="left:1127px;top:663px;width:100px">112,500,000</div>
<div class="c acc " style="left:1228px;top:663px;width:100px">112,500,000</div>
<div class="c acc " style="left:1329px;top:663px;width:100px">112,500,000</div>
<div class="c acc " style="left:1430px;top:663px;width:100px">112,500,000</div>
<div class="c acc " style="left:1531px;top:663px;width:100px">112,500,000</div>
<div class="c acc " style="left:1632px;top:663px;width:100px">112,500,000</div>
<div class="c acc " style="left:1733px;top:663px;width:100px">112,500,000</div>
<div class="c acc " style="left:1834px;top:663px;width:100px">112,500,000</div>
<div class="c " style="left:26px;top:679px;width:304px">Wifi</div>
<div class="c acc2" style="left:331px;top:679px;width:100px">500,000</div>
<div class="c " style="left:432px;top:679px;width:96px">/tháng</div>
<div class="c acc " style="left:925px;top:679px;width:100px">500,000</div>
<div class="c acc " style="left:1026px;top:679px;width:100px">500,000</div>
<div class="c acc " style="left:1127px;top:679px;width:100px">500,000</div>
<div class="c acc " style="left:1228px;top:679px;width:100px">500,000</div>
<div class="c acc " style="left:1329px;top:679px;width:100px">500,000</div>
<div class="c acc " style="left:1430px;top:679px;width:100px">500,000</div>
<div class="c acc " style="left:1531px;top:679px;width:100px">500,000</div>
<div class="c acc " style="left:1632px;top:679px;width:100px">500,000</div>
<div class="c acc " style="left:1733px;top:679px;width:100px">500,000</div>
<div class="c acc " style="left:1834px;top:679px;width:100px">500,000</div>
    <div class="abs" style="left:0px;top:50px;width:1890px;height:1px;background:#8c8c8c;z-index:4"></div>
    <div id="selbox" class="abs" style="left:329px;top:321px;width:104px;height:20px;border:2px solid #217346;box-shadow:inset 0 0 0 1px #fff"></div>
    <div class="abs" style="left:427px;top:335px;width:7px;height:7px;background:#217346;border-left:1px solid #fff;border-top:1px solid #fff"></div>
  </div>
  <div id="hdrtop"></div>
  <div id="hdrleft"></div>
  <svg class="abs" style="left:12px;top:4px" width="11" height="10" viewBox="0 0 11 10"><path d="M10.5 0 V9.5 H1 Z" fill="#b7b7b7"/></svg>
  <div class="abs" style="left:25px;top:1px;width:1px;height:16px;background:#ababab"></div>
<div class="ch" style="left:26px;width:304px">A</div>
<div class="chs" style="left:330px"></div>
<div class="ch sel" style="left:331px;width:100px">B</div>
<div class="chs" style="left:431px"></div>
<div class="ch" style="left:432px;width:96px">C</div>
<div class="chs" style="left:528px"></div>
<div class="ch" style="left:529px;width:103px">D</div>
<div class="chs" style="left:632px"></div>
<div class="ch" style="left:633px;width:89px">E</div>
<div class="chs" style="left:722px"></div>
<div class="ch" style="left:723px;width:100px">F</div>
<div class="chs" style="left:823px"></div>
<div class="ch" style="left:824px;width:100px">G</div>
<div class="chs" style="left:924px"></div>
<div class="ch" style="left:925px;width:100px">H</div>
<div class="chs" style="left:1025px"></div>
<div class="ch" style="left:1026px;width:100px">I</div>
<div class="chs" style="left:1126px"></div>
<div class="ch" style="left:1127px;width:100px">J</div>
<div class="chs" style="left:1227px"></div>
<div class="ch" style="left:1228px;width:100px">K</div>
<div class="chs" style="left:1328px"></div>
<div class="ch" style="left:1329px;width:100px">L</div>
<div class="chs" style="left:1429px"></div>
<div class="ch" style="left:1430px;width:100px">M</div>
<div class="chs" style="left:1530px"></div>
<div class="ch" style="left:1531px;width:100px">N</div>
<div class="chs" style="left:1631px"></div>
<div class="ch" style="left:1632px;width:100px">O</div>
<div class="chs" style="left:1732px"></div>
<div class="ch" style="left:1733px;width:100px">P</div>
<div class="chs" style="left:1833px"></div>
<div class="ch" style="left:1834px;width:100px">Q</div>
<div class="chs" style="left:1934px"></div>
<div class="rh" style="top:17px">1</div>
<div class="rh" style="top:34px">2</div>
<div class="rh" style="top:51px">3</div>
<div class="rh" style="top:68px">4</div>
<div class="rh" style="top:85px">5</div>
<div class="rh" style="top:102px">6</div>
<div class="rh" style="top:119px">7</div>
<div class="rh" style="top:136px">8</div>
<div class="rh" style="top:153px">9</div>
<div class="rh" style="top:170px">10</div>
<div class="rh" style="top:187px">11</div>
<div class="rh" style="top:204px">12</div>
<div class="rh" style="top:221px">13</div>
<div class="rh" style="top:238px">14</div>
<div class="rh" style="top:255px">15</div>
<div class="rh" style="top:272px">16</div>
<div class="rh" style="top:289px">17</div>
<div class="rh" style="top:306px">18</div>
<div class="rh sel" style="top:323px">19</div>
<div class="rh" style="top:340px">20</div>
<div class="rh" style="top:357px">21</div>
<div class="rh" style="top:374px">22</div>
<div class="rh" style="top:391px">23</div>
<div class="rh" style="top:408px">24</div>
<div class="rh" style="top:425px">25</div>
<div class="rh" style="top:442px">26</div>
<div class="rh" style="top:459px">27</div>
<div class="rh" style="top:476px">28</div>
<div class="rh" style="top:493px">29</div>
<div class="rh" style="top:510px">30</div>
<div class="rh" style="top:527px">31</div>
<div class="rh" style="top:544px">32</div>
<div class="rh" style="top:561px">33</div>
<div class="rh" style="top:578px">34</div>
<div class="rh" style="top:595px">35</div>
<div class="rh" style="top:612px">36</div>
<div class="rh" style="top:629px">37</div>
<div class="rh" style="top:646px">38</div>
<div class="rh" style="top:663px">39</div>
<div class="rh" style="top:680px">40</div>
</div>
<!-- vertical scrollbar -->
<div class="abs" style="left:1890px;top:269px;width:30px;height:684px;background:#e6e6e6"></div>
<div class="abs" style="left:1891px;top:286px;width:26px;height:667px;background:#f0f0f0"></div>
<div class="abs" style="left:1917px;top:269px;width:3px;height:684px;background:#e2e2e2"></div>
<div class="abs" style="left:1889px;top:286px;width:1px;height:667px;background:#a0a0a0"></div>
<div class="abs" style="left:1892px;top:270px;width:25px;height:25px;background:#fdfdfd;border:1px solid #9e9e9e"></div>
<svg class="abs" style="left:1898px;top:278px" width="13" height="8" viewBox="0 0 13 8"><path d="M0.9 7.1 L6.5 1 L12.1 7.1 Z" fill="#333"/></svg>
<div class="abs" style="left:1892px;top:295px;width:25px;height:319px;background:#fdfdfd;border:1px solid #9c9c9c"></div>
<div class="abs" style="left:1892px;top:929px;width:25px;height:25px;background:#fdfdfd;border:1px solid #9e9e9e"></div>
<svg class="abs" style="left:1898px;top:938px" width="13" height="8" viewBox="0 0 13 8"><path d="M0.9 1 L6.5 7 L12.1 1 Z" fill="#333"/></svg>
<!-- SHEET BAR -->
<div id="sheetbar"></div>
<div id="status"></div>
<svg class="abs" style="left:27px;top:962px" width="10" height="14" viewBox="0 0 10 14"><path d="M8 1 L2 7 L8 13 Z" fill="#c4c4c4"/></svg>
<svg class="abs" style="left:62px;top:962px" width="10" height="14" viewBox="0 0 10 14"><path d="M2 1 L8 7 L2 13 Z" fill="#c4c4c4"/></svg>
<div class="sep" style="left:118px"></div>
<div class="st" id="s0" style="left:135.50px;transform:scaleX(0.9866);">Tóm tắt KQKD</div>
<div class="sep" style="left:279px"></div>
<div class="st" id="s1" style="left:295.50px;transform:scaleX(0.9986);">Diện tích</div>
<div class="sep" style="left:389px"></div>
<div class="st" id="s2" style="left:407.50px;transform:scaleX(1.0063);">Tổng vốn đầu tư</div>
<div class="sep" style="left:571px"></div>
<div class="st" id="s3" style="left:590.50px;transform:scaleX(1.0094);">Thông số kinh doanh</div>
<div class="abs" style="left:794px;top:953px;width:119px;height:31px;background:#fff;border-bottom:2px solid #217346;border-left:1px solid #8c8c8c;border-right:1px solid #8c8c8c"></div>
<div class="st" id="s4" style="left:806.45px;transform:scaleX(1.0513);color:#217346;font-weight:bold">Dòng tiền</div>
<div class="st" id="s5" style="left:931.00px;transform:scaleX(0.9923);">Độ nhạy 2 chiều</div>
<div class="sep" style="left:1090px"></div>
<div class="st" id="s6" style="left:1109.50px;transform:scaleX(0.9923);">Độ nhạy 1 chiều</div>
<div class="sep" style="left:1267px"></div>
<svg class="abs" style="left:1306px;top:958px" width="24" height="24" viewBox="0 0 24 24" fill="none" stroke="#6a6a6a" stroke-width="1.3"><circle cx="12" cy="12" r="10"/><path d="M12 6.5 V17.5 M6.5 12 H17.5"/></svg>
<div class="abs" style="left:1351px;top:962px;width:3px;height:3px;background:#b0b0b0"></div>
<div class="abs" style="left:1351px;top:968px;width:3px;height:3px;background:#b0b0b0"></div>
<div class="abs" style="left:1351px;top:974px;width:3px;height:3px;background:#b0b0b0"></div>
<!-- horizontal scrollbar -->
<div class="abs" style="left:1372px;top:957px;width:516px;height:25px;background:#f0f0f0"></div>
<div class="abs" style="left:1372px;top:957px;width:26px;height:25px;background:#fdfdfd;border:1px solid #9a9a9a"></div>
<svg class="abs" style="left:1380px;top:963px" width="8" height="13" viewBox="0 0 8 13"><path d="M7.3 0.7 L1 6.5 L7.3 12.3 Z" fill="#1a1a1a"/></svg>
<div class="abs" style="left:1397px;top:957px;width:378px;height:25px;background:#fff;border:1px solid #9a9a9a"></div>
<div class="abs" style="left:1863px;top:957px;width:25px;height:25px;background:#fdfdfd;border:1px solid #9a9a9a"></div>
<svg class="abs" style="left:1872px;top:963px" width="8" height="13" viewBox="0 0 8 13"><path d="M0.7 0.7 L7 6.5 L0.7 12.3 Z" fill="#1a1a1a"/></svg>
<!-- STATUS BAR -->
<div class="t" id="trd" style="left:10.01px;transform:scaleX(0.9907);top:994.2px;font-size:14.6px;line-height:22px;color:#444">Ready</div>
<svg class="abs" style="left:80px;top:992px" width="24" height="23" viewBox="80 992 24 23" fill="none" stroke="#444" stroke-width="1.5" stroke-linecap="round" stroke-linejoin="round"><circle cx="90.6" cy="996.3" r="2.4"/><path d="M82.2 999.6 Q81.8 998.2 83.3 998 Q90.6 1001.6 97.6 997.8 Q99.2 997.8 98.6 999.4 Q96 1001.5 93.4 1002.2 V1005 M87.8 1002.2 Q85 1001.5 82.2 999.6 M87.8 1002.2 V1005.5 L85 1012.6 Q85.5 1014.2 86.9 1013.3 L90.3 1007 L91.6 1009"/><path d="M93.6 1007 L101.8 1014.2 M101.8 1007 L93.6 1014.2" stroke-width="1.4"/></svg>
<div class="t" id="tac" style="left:108.50px;transform:scaleX(1.0440);top:994.2px;font-size:14.6px;line-height:22px;color:#444">Accessibility: Investigate</div>
<div class="abs" style="left:1475px;top:988px;width:60px;height:27px;background:#d0d0d0"></div>
<svg class="abs" style="left:1493px;top:992px" width="24" height="23" viewBox="1493 992 24 23" fill="none" stroke="#444" stroke-width="1.7"><rect x="1495.2" y="994.2" width="18" height="17.4"/><path d="M1495 1000.1 H1513.4 M1495 1005.8 H1513.4 M1501.2 994 V1011.8 M1507.2 994 V1011.8"/></svg>
<svg class="abs" style="left:1553px;top:992px" width="24" height="23" viewBox="1553 992 24 23" fill="none" stroke="#444" stroke-width="1.5"><rect x="1554.8" y="994.2" width="20.2" height="17.4"/><rect x="1558.6" y="997.6" width="12.6" height="10.6" stroke-width="1.3"/><path d="M1561.5 1000.5 H1568.5 M1561.5 1003 H1568.5 M1561.5 1005.5 H1568.5" stroke-width="1.1"/></svg>
<svg class="abs" style="left:1613px;top:992px" width="24" height="23" viewBox="1613 992 24 23" fill="none" stroke="#444" stroke-width="1.5"><rect x="1615.2" y="994.2" width="19.8" height="17.4"/><path d="M1615 1003.6 H1628.6 M1621.5 994 V1003.6 M1627.9 994 V1003.6"/></svg>
<div class="abs" style="left:1663px;top:1003px;width:11px;height:1px;background:#5a5a5a"></div>
<div class="abs" style="left:1683px;top:1002.6px;width:148px;height:2px;background:#404040"></div>
<div class="abs" style="left:1756.3px;top:999.6px;width:2px;height:9px;background:#404040"></div>
<div class="abs" style="left:1722px;top:995px;width:8px;height:17px;background:#3a3a3a"></div>
<div class="abs" style="left:1839px;top:1003px;width:12px;height:1px;background:#5a5a5a"></div>
<div class="abs" style="left:1844px;top:998px;width:1px;height:11px;background:#5a5a5a"></div>
<div class="t" id="tzm" style="left:1869.00px;transform:scaleX(1.0275);top:994.2px;font-size:15px;line-height:22px;color:#444">60%</div>
</body></html>
